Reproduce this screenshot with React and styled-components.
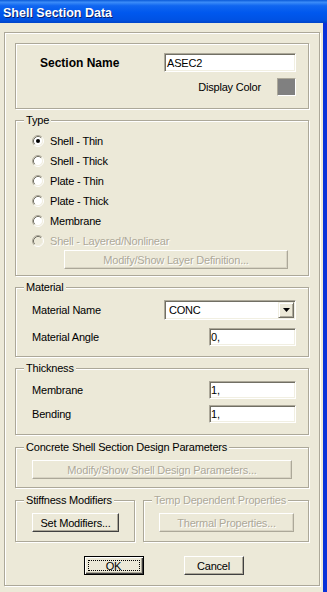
import React from 'react';
import styled, { createGlobalStyle, css } from 'styled-components';

const GlobalStyle = createGlobalStyle`
  html, body {
    margin: 0;
    padding: 0;
    background: #ece9d8;
  }
  body {
    font-family: "Liberation Sans", Arial, sans-serif;
    font-size: 11px;
    letter-spacing: -0.2px;
    color: #000;
  }
`;

const etched = css`
  border: 1px solid #aca899;
  box-shadow: inset 1px 1px 0 #fff, 1px 1px 0 #fff;
`;

const sunken = css`
  border: 1px solid;
  border-color: #aca899 #fff #fff #aca899;
  box-shadow: inset 1px 1px 0 #716f64, inset -1px -1px 0 #f1efe2;
`;

const Window = styled.div`
  width: 327px;
  height: 592px;
  display: flex;
  flex-direction: column;
  overflow: hidden;
  background: #ece9d8;
`;

const TitleBar = styled.div`
  height: 23px;
  flex-shrink: 0;
  display: flex;
  align-items: center;
  padding: 2px 0 0 3px;
  box-sizing: border-box;
  background: linear-gradient(
    to bottom,
    #0a5ad8 0%,
    #3b8cf8 10%,
    #1066f0 25%,
    #0058ee 55%,
    #0052e4 85%,
    #0044c8 100%
  );
  color: #fff;
  font-weight: bold;
  font-size: 12.5px;
  letter-spacing: 0;
  text-shadow: 1px 1px 0 #0a1f6c;
`;

const Body = styled.div`
  flex: 1;
  display: flex;
  align-items: flex-start;
  padding: 9px 0 0 4px;
  border-right: 4px solid #0831d9;
`;

const OuterBox = styled.div`
  ${etched};
  box-sizing: border-box;
  width: 316px;
  padding: 10px;
  display: flex;
  flex-direction: column;
`;

const Group = styled.div`
  ${etched};
  position: relative;
  margin-top: ${p => p.$mt || 0}px;
  padding: ${p => p.$pad};
  ${p => p.$width && `width: ${p.$width}px; box-sizing: border-box; flex-shrink: 0;`}
  ${p => p.$grow && 'flex: 1;'}
  display: flex;
  flex-direction: column;
`;

const Legend = styled.span`
  position: absolute;
  top: -7px;
  left: 8px;
  padding: 0 2px;
  line-height: 13px;
  background: #ece9d8;
  white-space: nowrap;
  color: ${p => (p.$disabled ? '#aca899' : '#000')};
  ${p => p.$disabled && 'text-shadow: 1px 1px 0 #fff;'}
`;

const SectionGrid = styled.div`
  display: grid;
  grid-template-columns: 1fr auto;
  row-gap: 6px;
  align-items: center;
`;

const BoldLabel = styled.span`
  font-weight: bold;
  font-size: 12px;
  letter-spacing: 0;
  padding-left: 24px;
`;

const TextField = styled.div`
  ${sunken};
  box-sizing: border-box;
  width: ${p => p.$w}px;
  height: ${p => p.$h}px;
  background: #fff;
  padding: 0 ${p => p.$pl || 2}px;
  display: flex;
  align-items: center;
  font-size: 11px;
`;

const ColorRow = styled.div`
  grid-column: 1 / -1;
  display: flex;
  justify-content: flex-end;
  align-items: center;
  gap: 16px;
`;

const Swatch = styled.div`
  width: 19px;
  height: 18px;
  box-sizing: border-box;
  border: 1px solid;
  border-color: #aca899 #fff #fff #aca899;
  background: #808080;
`;

const RadioList = styled.div`
  display: flex;
  flex-direction: column;
  gap: 2px;
`;

const RadioRow = styled.label`
  height: 18px;
  display: flex;
  align-items: center;
  gap: 6px;
  color: ${p => (p.$disabled ? '#aca899' : '#000')};
  ${p => p.$disabled && 'text-shadow: 1px 1px 0 #fff;'}
`;

const FieldRow = styled.div`
  display: flex;
  align-items: center;
  justify-content: space-between;
  margin-top: ${p => p.$mt || 0}px;
`;

const Button = styled.div`
  box-sizing: border-box;
  width: ${p => p.$w}px;
  height: 19px;
  margin-left: ${p => p.$ml || 0}px;
  display: flex;
  align-items: center;
  justify-content: center;
  background: #ece9d8;
  border: 1px solid;
  white-space: nowrap;
  ${p =>
    p.$disabled
      ? css`
          border-color: #fff #aca899 #aca899 #fff;
          box-shadow: inset -1px -1px 0 #d8d4c4;
          color: #aca899;
          text-shadow: 1px 1px 0 #fff;
        `
      : css`
          border-color: #fff #404040 #404040 #fff;
          box-shadow: inset -1px -1px 0 #aca899;
        `}
  ${p =>
    p.$default &&
    css`
      border: 1px solid #000;
      box-shadow: inset 1px 1px 0 #fff, inset -1px -1px 0 #404040,
        inset -2px -2px 0 #aca899;
      padding: 3px;
    `}
`;

const FocusRing = styled.span`
  flex: 1;
  align-self: stretch;
  display: flex;
  align-items: center;
  justify-content: center;
  outline: 1px dotted #000;
  outline-offset: -1px;
`;

const Combo = styled.div`
  ${sunken};
  box-sizing: border-box;
  width: 132px;
  height: 20px;
  background: #fff;
  display: flex;
  align-items: center;
  padding: 1px;
`;

const ComboValue = styled.span`
  flex: 1;
  padding-left: 3px;
`;

const DropButton = styled.div`
  box-sizing: border-box;
  width: 16px;
  height: 16px;
  display: flex;
  align-items: center;
  justify-content: center;
  background: #ece9d8;
  border: 1px solid;
  border-color: #f1efe2 #716f64 #716f64 #f1efe2;
  box-shadow: inset 1px 1px 0 #fff, inset -1px -1px 0 #aca899;
`;

const StiffRow = styled.div`
  display: flex;
  gap: 8px;
  margin-top: 12px;
`;

const ActionRow = styled.div`
  display: flex;
  justify-content: center;
  gap: 40px;
  margin: 14px 0 0 3px;
`;

function Radio({ checked, disabled }) {
  return (
    <svg width="12" height="12" viewBox="0 0 12 12">
      <circle cx="6" cy="6" r="4.5" fill={disabled ? '#ece9d8' : '#fff'} />
      <path d="M2.11 9.89 A5.5 5.5 0 0 1 9.89 2.11" fill="none" stroke="#aca899" />
      <path d="M9.89 2.11 A5.5 5.5 0 0 1 2.11 9.89" fill="none" stroke="#fff" />
      <path d="M2.82 9.18 A4.5 4.5 0 0 1 9.18 2.82" fill="none" stroke="#716f64" />
      <path d="M9.18 2.82 A4.5 4.5 0 0 1 2.82 9.18" fill="none" stroke="#f1efe2" />
      {checked && <circle cx="6" cy="6" r="2" fill="#000" />}
    </svg>
  );
}

const types = [
  { label: 'Shell - Thin', checked: true },
  { label: 'Shell - Thick' },
  { label: 'Plate - Thin' },
  { label: 'Plate - Thick' },
  { label: 'Membrane' },
  { label: 'Shell - Layered/Nonlinear', disabled: true },
];

export default function App() {
  return (
    <>
      <GlobalStyle />
      <Window>
        <TitleBar>Shell Section Data</TitleBar>
        <Body>
          <OuterBox>
            <Group $pad="9px 12px 12px 0">
              <SectionGrid>
                <BoldLabel>Section Name</BoldLabel>
                <TextField $w={132} $h={19}>ASEC2</TextField>
                <ColorRow>
                  <span>Display Color</span>
                  <Swatch />
                </ColorRow>
              </SectionGrid>
            </Group>

            <Group $mt={11} $pad="11px 12px 6px 16px">
              <Legend>Type</Legend>
              <RadioList>
                {types.map(t => (
                  <RadioRow key={t.label} $disabled={t.disabled}>
                    <Radio checked={t.checked} disabled={t.disabled} />
                    {t.label}
                  </RadioRow>
                ))}
              </RadioList>
              <Button $w={224} $ml={32} $disabled>
                Modify/Show Layer Definition...
              </Button>
            </Group>

            <Group $mt={11} $pad="12px 12px 10px 16px">
              <Legend>Material</Legend>
              <FieldRow>
                <span>Material Name</span>
                <Combo>
                  <ComboValue>CONC</ComboValue>
                  <DropButton>
                    <svg width="7" height="4" viewBox="0 0 7 4">
                      <polygon points="0,0 7,0 3.5,4" fill="#000" />
                    </svg>
                  </DropButton>
                </Combo>
              </FieldRow>
              <FieldRow $mt={8}>
                <span>Material Angle</span>
                <TextField $w={87} $h={18} $pl={1}>0,</TextField>
              </FieldRow>
            </Group>

            <Group $mt={11} $pad="12px 12px 11px 16px">
              <Legend>Thickness</Legend>
              <FieldRow>
                <span>Membrane</span>
                <TextField $w={87} $h={18} $pl={1}>1,</TextField>
              </FieldRow>
              <FieldRow $mt={6}>
                <span>Bending</span>
                <TextField $w={87} $h={18} $pl={1}>1,</TextField>
              </FieldRow>
            </Group>

            <Group $mt={12} $pad="12px 12px 8px 16px">
              <Legend>Concrete Shell Section Design Parameters</Legend>
              <Button $w={260} $disabled>
                Modify/Show Shell Design Parameters...
              </Button>
            </Group>

            <StiffRow>
              <Group $width={120} $pad="12px 15px 9px 16px">
                <Legend>Stiffness Modifiers</Legend>
                <Button $w={87}>Set Modifiers...</Button>
              </Group>
              <Group $grow $pad="12px 14px 9px 15px">
                <Legend $disabled>Temp Dependent Properties</Legend>
                <Button $w={135} $disabled>
                  Thermal Properties...
                </Button>
              </Group>
            </StiffRow>

            <ActionRow>
              <Button $w={60} $default>
                <FocusRing>OK</FocusRing>
              </Button>
              <Button $w={60}>Cancel</Button>
            </ActionRow>
          </OuterBox>
        </Body>
      </Window>
    </>
  );
}
